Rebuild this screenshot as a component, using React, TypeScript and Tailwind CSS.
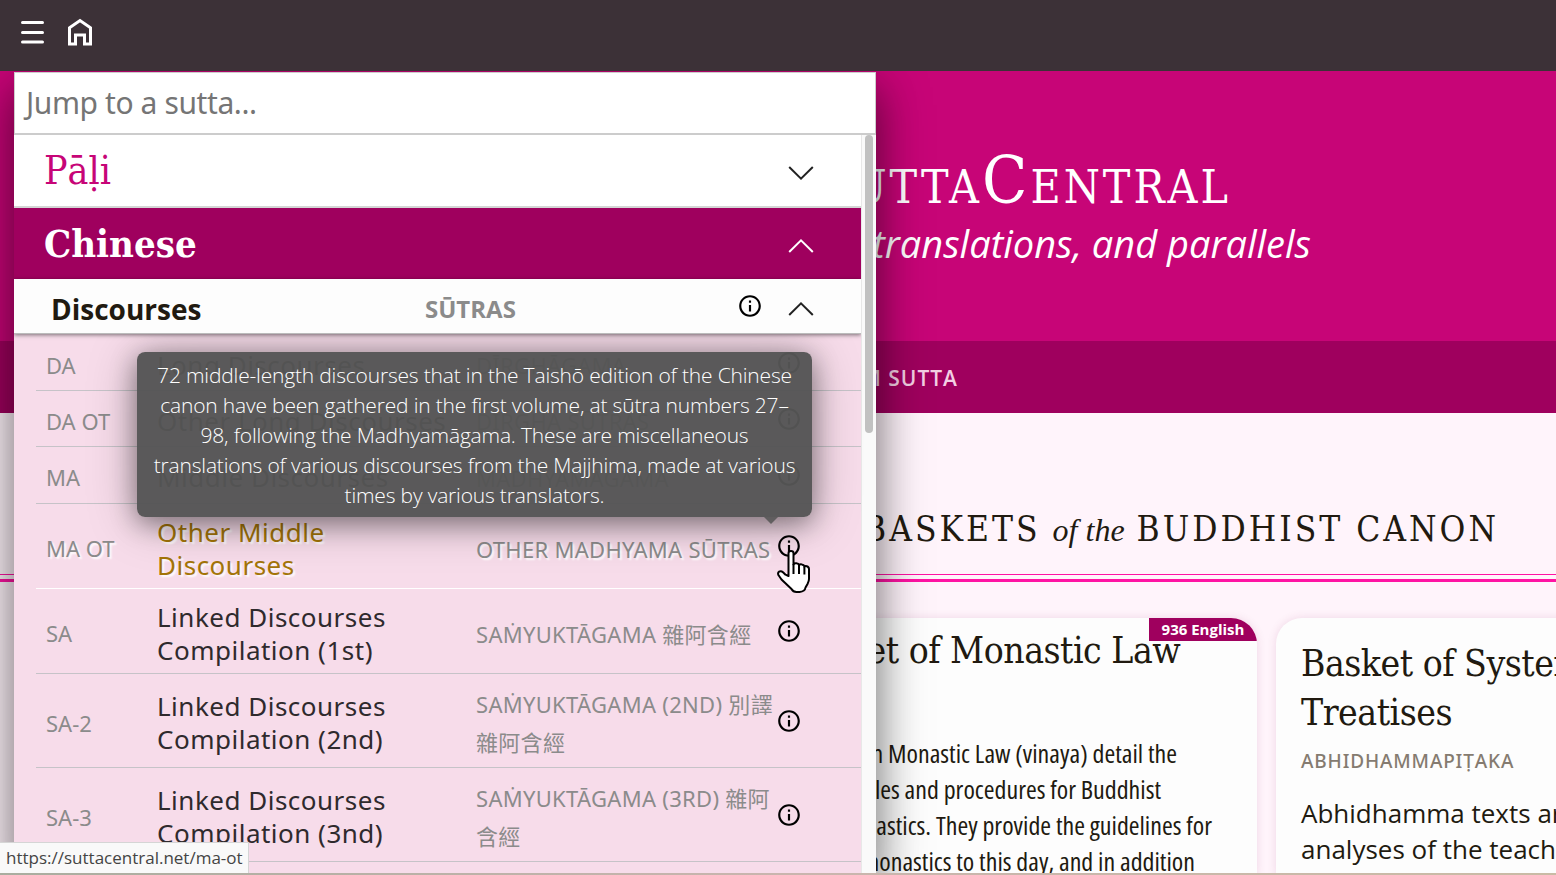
import React from 'react';

type Discourse = {
  id: string;
  name: string[];
  root: string[];
  height: string;
  active?: boolean;
};

const discourses: Discourse[] = [
  { id: 'DA', name: ['Long Discourses'], root: ['DĪRGHĀGAMA'], height: 'h-14' },
  { id: 'DA OT', name: ['Other Long Discourses'], root: ['DĪRGHA SŪTRAS'], height: 'h-14' },
  { id: 'MA', name: ['Middle Discourses'], root: ['MADHYAMĀGAMA'], height: 'h-[57px]' },
  { id: 'MA OT', name: ['Other Middle', 'Discourses'], root: ['OTHER MADHYAMA SŪTRAS'], height: 'h-[85px]', active: true },
  { id: 'SA', name: ['Linked Discourses', 'Compilation (1st)'], root: ['SAṀYUKTĀGAMA 雜阿含經'], height: 'h-[85px]' },
  { id: 'SA-2', name: ['Linked Discourses', 'Compilation (2nd)'], root: ['SAṀYUKTĀGAMA (2ND) 別譯', '雜阿含經'], height: 'h-[94px]' },
  { id: 'SA-3', name: ['Linked Discourses', 'Compilation (3nd)'], root: ['SAṀYUKTĀGAMA (3RD) 雜阿', '含經'], height: 'h-[94px]' },
];

const tooltipLines = [
  '72 middle-length discourses that in the Taishō edition of the Chinese',
  'canon have been gathered in the first volume, at sūtra numbers 27–',
  '98, following the Madhyamāgama. These are miscellaneous',
  'translations of various discourses from the Majjhima, made at various',
  'times by various translators.',
];

function InfoIcon() {
  return (
    <svg viewBox="0 0 24 24" className="size-[26px] shrink-0" fill="black">
      <path d="M11 7h2v2h-2zm0 4h2v6h-2zm1-9C6.48 2 2 6.48 2 12s4.48 10 10 10 10-4.48 10-10S17.52 2 12 2zm0 18c-4.41 0-8-3.59-8-8s3.59-8 8-8 8 3.59 8 8-3.59 8-8 8z" />
    </svg>
  );
}

function Chevron({ up, className }: { up?: boolean; className: string }) {
  return (
    <svg viewBox="0 0 26 14" className={`h-3.5 w-[26px] shrink-0 ${className}`} fill="none" stroke="currentColor" strokeWidth="2">
      <path d={up ? 'M1.2 13 13 1.4 24.8 13' : 'M1.2 1 13 12.6 24.8 1'} />
    </svg>
  );
}

function TopBar() {
  return (
    <header className="relative z-20 flex h-[71px] shrink-0 items-start bg-[#3c3137] pt-[18px] pl-[21px] text-white">
      <svg viewBox="0 0 23 28" className="h-7 w-[23px]" fill="none" stroke="white" strokeWidth="3" strokeLinecap="round">
        <path d="M1.5 4.5h20M1.5 14.5h20M1.5 24h20" />
      </svg>
      <svg viewBox="0 0 24 28" className="ml-6 h-7 w-6" fill="none" stroke="white" strokeWidth="3">
        <path d="M1.5 25.9V9.8L12 2.6l10.500 7.200v16.100h-6V16.900h-9v9z" />
      </svg>
    </header>
  );
}

function Tooltip() {
  return (
    <div className="absolute top-[280px] left-[123px] h-[165px] w-[675px] rounded-lg bg-[#555555]/97 pt-2 text-center font-['Open_Sans',sans-serif] text-[21px] leading-[30px] font-light tracking-[-0.18px] whitespace-nowrap text-white shadow-[0_6px_26px_rgba(0,0,0,0.38),0_4px_50px_rgba(0,0,0,0.28)]">
      {tooltipLines.map((line) => (
        <div key={line}>{line}</div>
      ))}
      <div className="absolute top-full left-[627px] h-[7px] w-[14px] bg-[#555555]/85 [clip-path:polygon(0_0,100%_0,50%_100%)]" />
    </div>
  );
}

function HandCursor() {
  return (
    <svg viewBox="0 0 34 45" className="absolute top-[477px] left-[762px] h-[45px] w-[34px]" fill="white" stroke="black" strokeWidth="2" strokeLinejoin="round">
      <path d="M12.500 27V4.200Q12.500 2 15 2t2.500 2.200V15.500q.5-1.500 2.800-1.300 2.300.2 2.700 2 .8-1.300 2.800-.8 2.400.5 2.600 2.300.8-1 2.400-.5 2.200.7 2.200 3V30q0 2-1.500 5l-2 3.500q-.5 4-6 4.500h-3q-3.500 0-5-3L5.500 30.500 2.400 26Q1.500 23.800 3 22.700q2-1.200 4 .5l2.500 2.500z" />
      <path d="M17.500 15v10M23 16v9M28.400 18v7.500" fill="none" />
    </svg>
  );
}

function Navigation() {
  return (
    <aside className="absolute top-[72px] left-[14px] z-10 h-[801px] w-[862px] bg-[#fafafa] shadow-[0_19px_38px_rgba(0,0,0,0.3),0_15px_50px_rgba(0,0,0,0.35)]">
      <div className="flex h-full flex-col overflow-hidden">
        <div className="flex h-[63px] shrink-0 items-center border border-b-2 border-[#cccccc] bg-white pl-[11px] font-['Noto_Sans',sans-serif] text-[30px] tracking-[-0.4px] text-[#757575]">
          <span className="pb-px">Jump to a sutta...</span>
        </div>
        <div className="flex min-h-0 flex-1">
          <div className="flex w-[847px] shrink-0 flex-col overflow-hidden">
            <div className="flex h-[73px] shrink-0 items-center justify-between border-b-2 border-[#d5d5d5] bg-white pr-[47px] pl-[30px]">
              <span className="font-['DejaVu_Serif_Condensed','DejaVu_Serif',serif] text-[39px] leading-none text-[#c70577]">Pāḷi</span>
              <Chevron className="mt-1 text-[#222222]" />
            </div>
            <div className="flex h-[71px] shrink-0 items-center justify-between bg-[#9f005e] pr-[47px] pl-[30px] text-white">
              <span className="font-['DejaVu_Serif_Condensed','DejaVu_Serif',serif] text-[38px] leading-none font-bold">Chinese</span>
              <Chevron up className="mt-1" />
            </div>
            <div className="z-[1] flex h-[55px] shrink-0 items-center border-b border-[#bbbbbb] bg-[#fdfdfd] pr-[47px] pl-[37px] font-['Open_Sans',sans-serif] font-bold whitespace-nowrap shadow-[0_1px_4px_rgba(0,0,0,0.5)]">
              <span className="w-[374px] pt-1.5 text-[28px] [font-stretch:93%]">Discourses</span>
              <span className="w-[312px] pt-1.5 text-[24px] text-[#8b8b8b] [font-stretch:94%]">SŪTRAS</span>
              <InfoIcon />
              <Chevron up className="mt-1.5 ml-auto text-[#222222]" />
            </div>
            <div className="min-h-0 flex-1 overflow-hidden bg-[#f7dcea] pt-px pl-[22px] font-['Noto_Sans','Noto_Sans_CJK_TC',sans-serif] whitespace-nowrap">
              {discourses.map((d) => (
                <div
                  key={d.id}
                  className={`flex items-center border-b pl-2.5 ${d.height} ${
                    d.active ? 'border-white [text-shadow:2px_2px_2px_#fff]' : 'border-[#c6c3c8]'
                  }`}
                >
                  <span className="w-[111px] pt-[5px] text-[22px] text-[#8b8b8b]">{d.id}</span>
                  <span className={`w-[319px] pt-[5px] text-[26px] leading-[33px] tracking-[0.5px] ${d.active ? 'text-[#a37508]' : 'text-[#2f2a2d]'}`}>
                    {d.name.map((line) => (
                      <span key={line} className="block">{line}</span>
                    ))}
                  </span>
                  <span className="w-[300px] pt-[5px] text-[22px] leading-[38px] tracking-[0.3px] text-[#8b8b8b]">
                    {d.root.map((line) => (
                      <span key={line} className="block">{line}</span>
                    ))}
                  </span>
                  <InfoIcon />
                </div>
              ))}
              <div className="h-3" />
            </div>
          </div>
          <div className="flex w-[15px] justify-center border-l border-[#e8e8e8] bg-[#fafafa]">
            <div className="h-[298px] w-2 rounded-full bg-[#c1c1c1]" />
          </div>
        </div>
      </div>
      <Tooltip />
      <HandCursor />
    </aside>
  );
}

function Banner() {
  return (
    <section className="flex h-[270px] shrink-0 flex-col items-end bg-[#c70577] text-white">
      <h1 className="mt-[70px] mr-[325px] font-['DejaVu_Serif_Condensed','DejaVu_Serif',serif] text-[66px] leading-[80px] tracking-[3px] [font-variant-caps:small-caps]">
        SuttaCentral
      </h1>
      <p className="-mt-1 mr-[245px] font-['Open_Sans',sans-serif] text-[38px] leading-[52px] italic [font-stretch:88%]">
        Early Buddhist texts, translations, and parallels
      </p>
    </section>
  );
}

function VinayaCard() {
  return (
    <article className="flex w-[470px] shrink-0 flex-col overflow-hidden rounded-t-[26px] bg-[#fdfdfd] shadow-[0_0_10px_rgba(120,0,70,0.12)]">
      <div className="ml-auto flex h-9 w-[108px] items-center justify-center bg-[#9f005e] font-['Open_Sans',sans-serif] text-[15px] font-bold text-white [font-stretch:92%]">
        936 English
      </div>
      <h3 className="-mt-[15px] mr-[180px] text-right font-['DejaVu_Serif_Condensed','DejaVu_Serif',serif] text-[37px] leading-[49px] tracking-[-0.5px] whitespace-nowrap">
        Basket of Monastic Law
      </h3>
      <div className="mt-[60px] flex flex-col text-right font-['Open_Sans',sans-serif] text-[26px] leading-9 whitespace-nowrap [font-stretch:87%]">
        <span className="mr-[80px]">Texts on Monastic Law (vinaya) detail the</span>
        <span className="mr-[96px]">rules and procedures for Buddhist</span>
        <span className="mr-[45px]">monastics. They provide the guidelines for</span>
        <span className="mr-[62px]">monastics to this day, and in addition</span>
      </div>
    </article>
  );
}

function AbhidhammaCard() {
  return (
    <article className="flex w-[470px] shrink-0 flex-col rounded-t-[26px] bg-[#fdfdfd] pt-[21px] pl-[25px] whitespace-nowrap shadow-[0_0_10px_rgba(120,0,70,0.12)]">
      <h3 className="font-['DejaVu_Serif_Condensed','DejaVu_Serif',serif] text-[37px] leading-[49px] tracking-[-0.5px]">
        Basket of Systematic
        <br />
        Treatises
      </h3>
      <p className="mt-2.5 font-['Noto_Sans',sans-serif] text-[19px] leading-7 font-medium tracking-[0.85px] text-[#857b70]">ABHIDHAMMAPIṬAKA</p>
      <div className="mt-5 font-['Open_Sans',sans-serif] text-[26px] leading-9 [font-stretch:88%]">
        Abhidhamma texts are systematic
        <br />
        analyses of the teachings
      </div>
    </article>
  );
}

export default function App() {
  return (
    <div className="relative flex h-[875px] w-[1556px] flex-col overflow-hidden bg-[#fff4fb] text-[#211a10]">
      <TopBar />
      <Banner />
      <nav className="flex h-[72px] shrink-0 items-center justify-end bg-[#9f005e] pt-1 pr-[598px] font-['Open_Sans',sans-serif] text-[21px] font-semibold tracking-[1px] text-[#f3cfe3] [font-stretch:93%]">
        RANDOM SUTTA
      </nav>
      <main className="flex min-h-0 flex-1 flex-col">
        <h2 className="mt-[90px] flex h-[52px] shrink-0 items-baseline justify-end gap-3 pr-[57px] font-['DejaVu_Serif_Condensed','DejaVu_Serif',serif] text-[35px] leading-[52px] tracking-[3px] whitespace-nowrap">
          <span>THREE BASKETS</span>
          <span className="font-['Liberation_Serif',serif] text-[32px] tracking-normal italic">of the</span>
          <span>BUDDHIST CANON</span>
        </h2>
        <div className="mt-[19px] h-2 shrink-0 border-t border-b-3 border-[#ff13a3]" />
        <div className="mt-[36px] flex min-h-0 flex-1 gap-[19px] overflow-visible pl-[787px]">
          <VinayaCard />
          <AbhidhammaCard />
        </div>
      </main>
      <Navigation />
      <div className="absolute bottom-0.5 left-0 z-20 flex h-[31px] w-[249px] items-center border-t border-r border-[#d5d5d5] bg-[#f9f9f9] pb-px pl-1.5 font-['Open_Sans',sans-serif] text-[17px] text-[#444444]">
        https://suttacentral.net/ma-ot
      </div>
      <footer className="absolute bottom-0 left-0 z-20 h-0.5 w-full bg-linear-to-r from-[#a9ad9f] via-[#c9b5ae] to-[#c9bba5]" />
    </div>
  );
}
